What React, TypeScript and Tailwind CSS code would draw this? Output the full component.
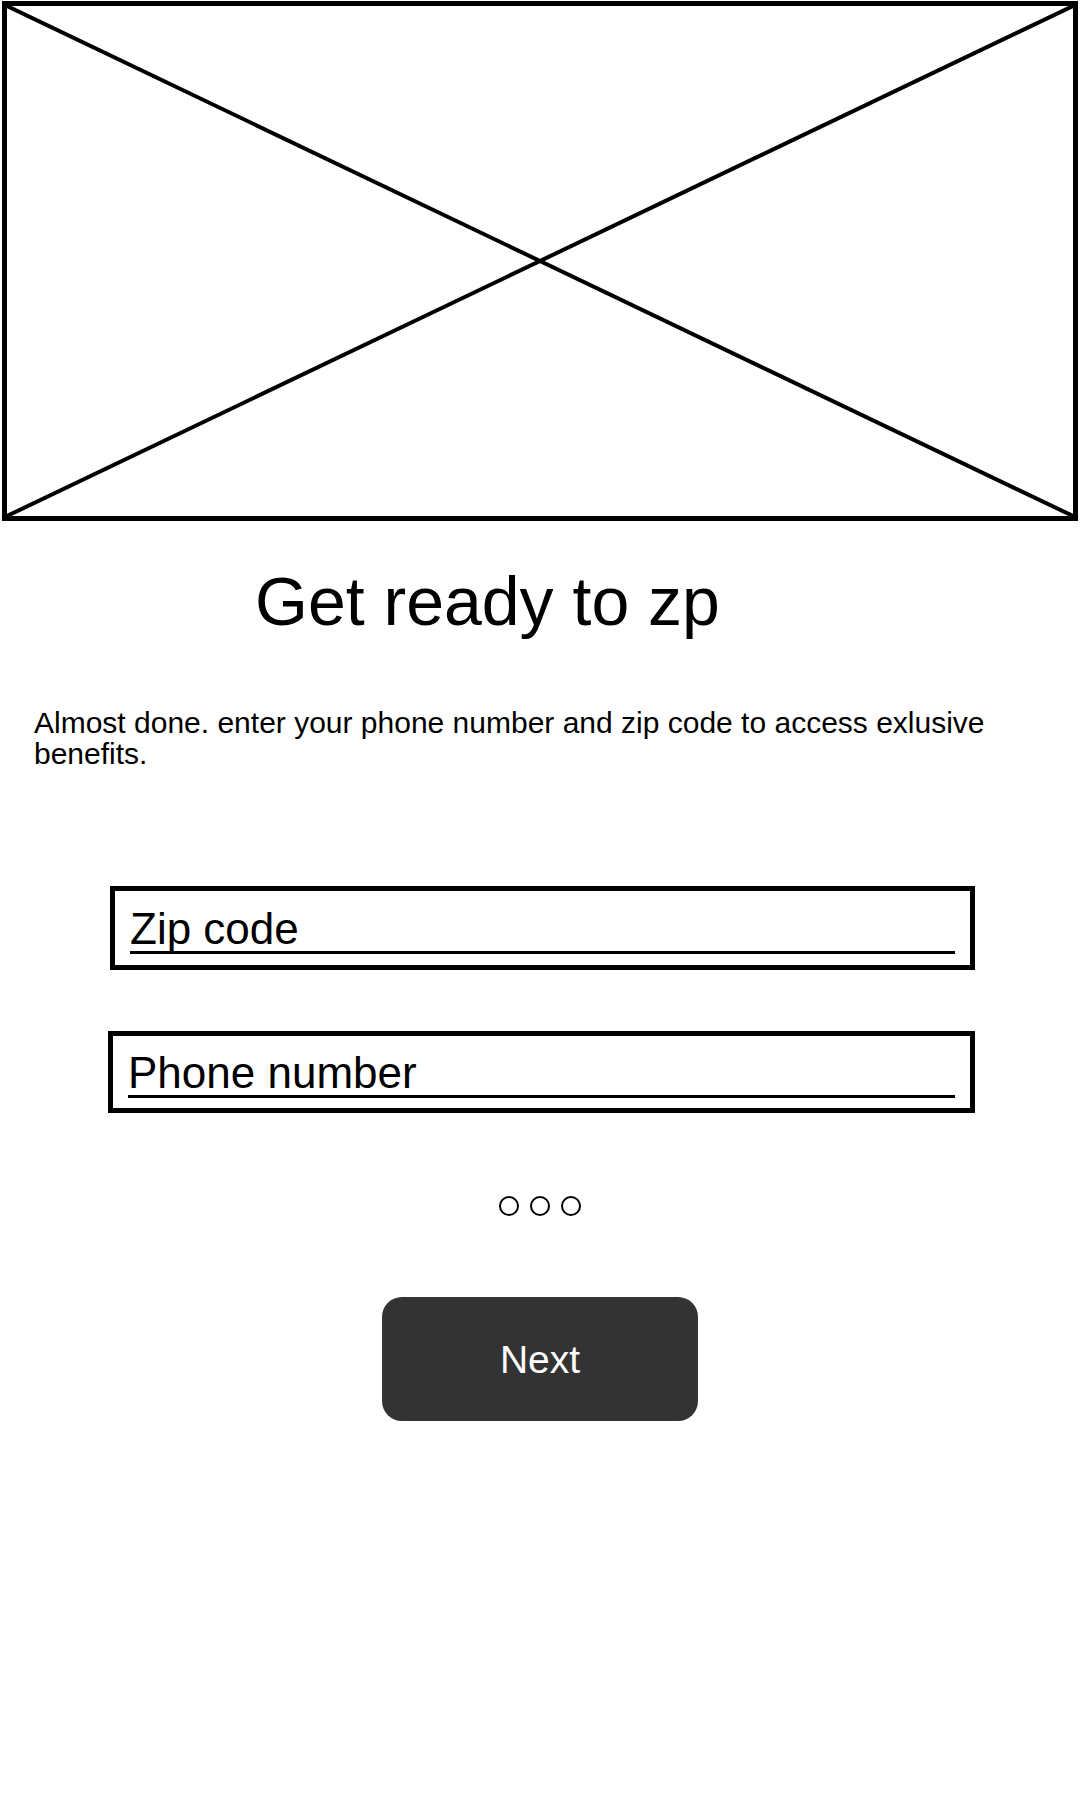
export default function App() {
  return (
    <div className="w-[1080px] min-h-[1800px] bg-white text-black font-['Liberation_Sans',Arial,sans-serif]">
      {/* Image placeholder */}
      <div className="mx-[2px] mt-[1px] h-[520px] border-[5px] border-black">
        <svg className="block w-full h-full" viewBox="0 0 100 100" preserveAspectRatio="none">
          <line x1="0" y1="0" x2="100" y2="100" stroke="black" strokeWidth="4" vectorEffect="non-scaling-stroke" />
          <line x1="100" y1="0" x2="0" y2="100" stroke="black" strokeWidth="4" vectorEffect="non-scaling-stroke" />
        </svg>
      </div>

      {/* Title */}
      <h1 className="mt-[46px] pl-[255px] text-[68px] leading-[68px]">Get ready to zp</h1>

      {/* Description */}
      <p className="mt-[72px] pl-[34px] pr-[40px] text-[30px] leading-[31px]">
        Almost done. enter your phone number and zip code to access exlusive benefits.
      </p>

      {/* Inputs */}
      <div className="mt-[117px] ml-[110px] w-[865px] border-[5px] border-black pt-[16px] pb-[11px] px-[15px]">
        <div className="border-b-[3px] border-black text-[44px] leading-[44px]">Zip code</div>
      </div>
      <div className="mt-[61px] ml-[108px] w-[867px] border-[5px] border-black pt-[15px] pb-[10px] px-[15px]">
        <div className="border-b-[3px] border-black text-[44px] leading-[44px]">Phone number</div>
      </div>

      {/* Page dots */}
      <div className="mt-[83px] flex justify-center gap-[11px]">
        <div className="w-[20px] h-[20px] rounded-full border-[2.5px] border-black" />
        <div className="w-[20px] h-[20px] rounded-full border-[2.5px] border-black" />
        <div className="w-[20px] h-[20px] rounded-full border-[2.5px] border-black" />
      </div>

      {/* Next button */}
      <div className="mt-[81px] flex justify-center">
        <button className="w-[316px] h-[124px] rounded-[20px] bg-[#333333] text-white text-[39px] leading-none">
          Next
        </button>
      </div>
    </div>
  );
}
